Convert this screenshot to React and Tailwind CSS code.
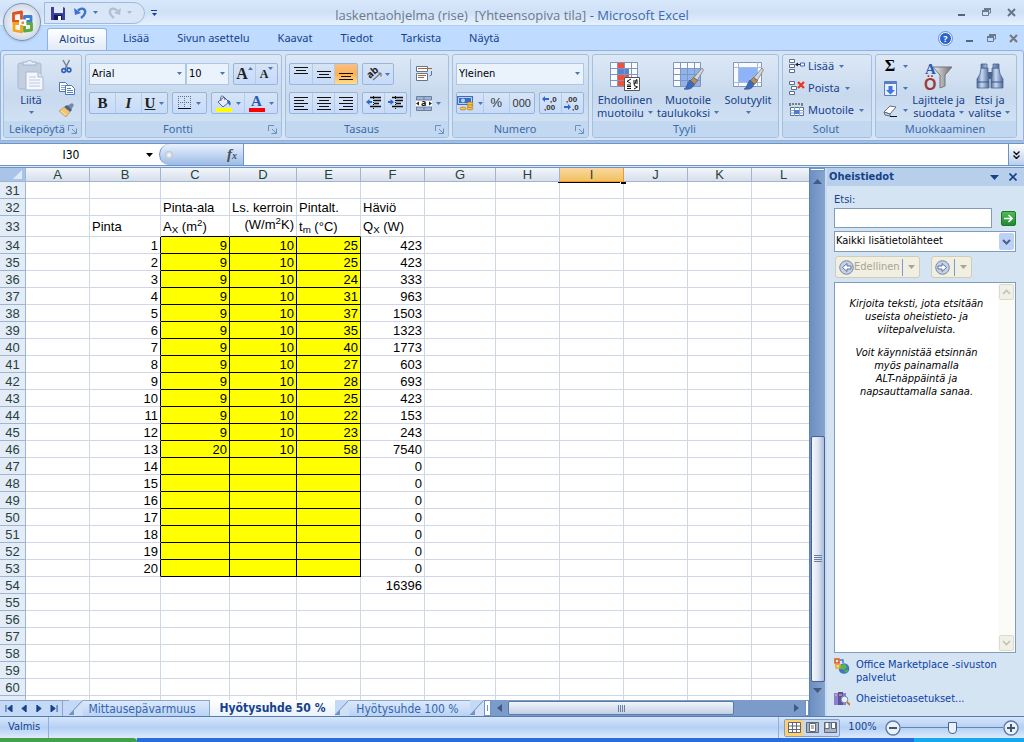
import clsx from 'clsx';

const UI = "font-['Noto_Sans',sans-serif]";
const PANE = "font-['DejaVu_Sans_Condensed','DejaVu_Sans',sans-serif]";

const columns = ['A', 'B', 'C', 'D', 'E', 'F', 'G', 'H', 'I', 'J', 'K', 'L'];

const surfaces = [
  [9, 10, 25, 423],
  [9, 10, 25, 423],
  [9, 10, 24, 333],
  [9, 10, 31, 963],
  [9, 10, 37, 1503],
  [9, 10, 35, 1323],
  [9, 10, 40, 1773],
  [9, 10, 27, 603],
  [9, 10, 28, 693],
  [9, 10, 25, 423],
  [9, 10, 22, 153],
  [9, 10, 23, 243],
  [20, 10, 58, 7540],
  ['', '', '', 0],
  ['', '', '', 0],
  ['', '', '', 0],
  ['', '', '', 0],
  ['', '', '', 0],
  ['', '', '', 0],
  ['', '', '', 0],
];

const cells = {
  32: { C: 'Pinta-ala', D: 'Ls. kerroin', E: 'Pintalt.', F: 'Häviö' },
  33: {
    B: 'Pinta',
    C: <>A<sub>X</sub> (m<sup>2</sup>)</>,
    D: <>(W/m<sup>2</sup>K)</>,
    E: <>t<sub>m</sub> (°C)</>,
    F: <>Q<sub>X</sub> (W)</>,
  },
  54: { F: 16396 },
};
surfaces.forEach(([c, d, e, f], i) => {
  cells[34 + i] = { B: i + 1, C: c, D: d, E: e, F: f };
});

const rows = Array.from({ length: 30 }, (_, i) => 31 + i);

/* ---------- small drawings ---------- */

function Arrow({ className = 'text-[#4b76b0]' }) {
  return (
    <svg viewBox="0 0 5 3" className={clsx('inline-block h-[3px] w-[5px] shrink-0', className)} fill="currentColor">
      <path d="M0 0h5L2.5 3z" />
    </svg>
  );
}

function OfficeLogo({ className }) {
  return (
    <svg viewBox="0 0 24 24" className={className} fill="none" strokeWidth="2.8" strokeLinejoin="round">
      <path d="M9 11.500H3.500V3.500L11.500 2v7.500" stroke="#e2531c" />
      <path d="M14.500 9.500V6.500H21V11.500H16.500" stroke="#3d7ed0" />
      <path d="M9 13.500H4V20.500L11.500 22v-7" stroke="#f2a71b" />
      <path d="M16.500 13.500H21.500V20L14.500 21v-5" stroke="#5fa83a" />
      <path d="M11.500 11.500h2.500v2.500h-2.500z" fill="#e98a3c" />
    </svg>
  );
}

function SaveIcon() {
  return (
    <svg viewBox="0 0 14 14" className="size-[14px]">
      <path d="M0 1h12l2 1v12H0z" fill="#3b3f9b" />
      <path d="M3 1h9v6H3z" fill="#dfe8fa" />
      <path d="M3 9h8v5H3z" fill="#15195c" />
      <path d="M7 10h3v4H7z" fill="#fff" />
    </svg>
  );
}

function UndoIcon({ flip, color }) {
  return (
    <svg viewBox="0 0 13 13" className={clsx('size-[13px]', flip && '-scale-x-100')} fill="none">
      <path d="M4 4.500C8 1 12 3 11 7c-.5 2-2 3.500-4 5" stroke={color} strokeWidth="2.400" />
      <path d="M0 2l1 7 6-2z" fill={color} />
    </svg>
  );
}

function MinimizeIcon() {
  return (
    <svg viewBox="0 0 9 9" className="size-[9px]">
      <path d="M1 6h7v2H1z" fill="#56657c" />
    </svg>
  );
}

function RestoreIcon() {
  return (
    <svg viewBox="0 0 9 9" className="size-[9px]" fill="none" stroke="#6c7a90">
      <path d="M2.500 3V.500H8.500V5H7" />
      <path d="M.500 3.500h6v4h-6z" />
      <path d="M0 3h7M2 1h7" strokeWidth="2" />
    </svg>
  );
}

function CloseIcon({ color = '#66758c' }) {
  return (
    <svg viewBox="0 0 9 9" className="size-[9px]" fill="none" stroke={color} strokeWidth="2">
      <path d="M1 1l7 7M8 1L1 8" />
    </svg>
  );
}

function PasteIcon() {
  return (
    <svg viewBox="0 0 28 32" className="h-8 w-7">
      <rect x="1" y="3" width="23" height="26" rx="2" fill="#c3cfe0" stroke="#a9b9d0" />
      <path d="M6 5V2h4c0-2 5-2 5 0h4v3z" fill="#e7edf6" stroke="#a4b3c9" />
      <path d="M9 12h12l5 5v13H9z" fill="#f3f7fd" stroke="#aab9ce" />
      <path d="M21 12v5h5" fill="#dbe5f3" stroke="#aab9ce" />
      <path d="M12 17h7M12 20h11M12 23h11M12 26h11" stroke="#bccbe0" />
    </svg>
  );
}

function CutIcon() {
  return (
    <svg viewBox="0 0 11 15" className="h-[15px] w-[11px]" fill="none">
      <path d="M2 1l5 9M8.500 1L4 10" stroke="#74839b" strokeWidth="1.500" />
      <circle cx="2.800" cy="11.500" r="1.900" stroke="#2f62b4" strokeWidth="1.600" />
      <circle cx="8" cy="11" r="1.900" stroke="#2f62b4" strokeWidth="1.600" />
    </svg>
  );
}

function CopyIcon() {
  return (
    <svg viewBox="0 0 16 14" className="h-[14px] w-4" stroke="#4d74b4">
      <path d="M.500 1.500h6l2 2v7h-8z" fill="#fff" />
      <path d="M2 4.500h4M2 6.500h4M2 8.500h4" stroke="#7ea0d6" />
      <path d="M6.500 4.500h6l3 3v6h-9z" fill="#fff" />
      <path d="M8 7.500h4M8 9.500h6M8 11.500h6" stroke="#5580c8" />
    </svg>
  );
}

function BrushIcon() {
  return (
    <svg viewBox="0 0 15 14" className="h-[14px] w-[15px]">
      <path d="M13 0l2 2-3 5-4-4z" fill="#7789ad" />
      <path d="M8 2l5 5-2 2-6-5z" fill="#4a5f8a" />
      <path d="M5 4l6 5-4 5-7-6z" fill="#f0c57a" stroke="#b98535" strokeWidth=".6" />
      <path d="M2 8l5 4" stroke="#fbe6b6" />
    </svg>
  );
}

function BordersIcon() {
  return (
    <svg viewBox="0 0 14 14" className="size-[14px]" fill="none" shapeRendering="crispEdges">
      <path d="M0 .500h13M0 6.500h13M.500 0v12M6.500 0v12M12.500 0v12" stroke="#5c6f8e" strokeDasharray="1 1" />
      <path d="M0 12.500h13" stroke="#111" />
    </svg>
  );
}

function FillIcon() {
  return (
    <svg viewBox="0 0 16 17" className="h-[17px] w-4">
      <path d="M2 7l6-5 5 5-6 5z" fill="#e6edf8" stroke="#56688a" />
      <path d="M5 6C3 0 8-1 9 5" fill="none" stroke="#56688a" />
      <path d="M12 5c3 1 3 4 2 6-1-2-2-3-3-4z" fill="#2d62b5" />
      <path d="M0 13h16v4H0z" fill="#ff0" />
    </svg>
  );
}

function AlignIcon({ lines, y = 3 }) {
  return (
    <svg viewBox="0 0 16 16" className="size-4" stroke="#111" shapeRendering="crispEdges">
      {lines.map(([x, w], i) => (
        <path key={i} d={`M${x} ${y + i * 3 + 0.5}h${w}`} />
      ))}
    </svg>
  );
}

function OrientationIcon() {
  return (
    <svg viewBox="0 0 17 16" className="h-4 w-[17px]">
      <text x="1" y="10" fontSize="10" fontWeight="bold" fill="#222" transform="rotate(-42 6 9)">ab</text>
      <path d="M6 14L14 7M14 7v3.500M14 7h-3.500" stroke="#7d726c" fill="none" strokeWidth="1.200" />
    </svg>
  );
}

function IndentIcon({ out }) {
  return (
    <svg viewBox="0 0 16 14" className="h-[14px] w-4">
      <path d="M4 1.500h11M8 4.500h7M8 7.500h5M4 10.500h11" stroke="#111" strokeWidth="1.600" />
      <path d="M7.500 0v14" stroke="#111" strokeDasharray="1 1" />
      <path d={out ? 'M0 6l3.500-3v2H6v2H3.500v2z' : 'M6 6L2.500 3v2H0v2h2.500v2z'} fill="#2f66cb" />
    </svg>
  );
}

function WrapIcon() {
  return (
    <svg viewBox="0 0 17 16" className="h-4 w-[17px]" fill="none">
      <path d="M.500 .500h11v5H.500z" fill="#fff" stroke="#66748a" />
      <path d="M2 2.500h14" stroke="#a2683c" />
      <path d="M15.500 5v4l-2 1" stroke="#4b76b0" />
      <path d="M.500 7.500h11v7H.500z" fill="#fff" stroke="#66748a" />
      <path d="M2 9.500h8M2 11.500h6" stroke="#a2683c" />
    </svg>
  );
}

function MergeIcon() {
  return (
    <svg viewBox="0 0 16 15" className="h-[15px] w-4">
      <path d="M.500 .500h15v14H.500z" fill="#9db4d8" stroke="#6d7f9d" />
      <path d="M0 4h16v7H0z" fill="#fff" />
      <path d="M8 0v4M8 11v4M0 4h16M0 11h16" stroke="#6d7f9d" />
      <path d="M0 7.500l3-2v4zM16 7.500l-3-2v4z" fill="#222" />
      <text x="5" y="10" fontSize="9" fontWeight="bold" fill="#111">a</text>
    </svg>
  );
}

function MoneyIcon() {
  return (
    <svg viewBox="0 0 17 16" className="h-4 w-[17px]">
      <path d="M0 1h16v9H0z" fill="#3d6cc0" />
      <path d="M1.500 2.500h13v6h-13z" fill="none" stroke="#b8d0f5" />
      <circle cx="6" cy="5.500" r="2" fill="#b8d0f5" />
      <g fill="#f6c343" stroke="#a8741a" strokeWidth=".6">
        <ellipse cx="13" cy="13.500" rx="3" ry="1.500" />
        <ellipse cx="13" cy="11" rx="3" ry="1.500" />
        <ellipse cx="13" cy="8.500" rx="3" ry="1.500" />
        <ellipse cx="6" cy="13.500" rx="3" ry="1.500" />
      </g>
    </svg>
  );
}

function DecimalIcon({ less }) {
  return (
    <svg viewBox="0 0 17 16" className="h-4 w-[17px]" fontSize="8" fontWeight="bold" fill="#333">
      <text x={less ? 2 : 8} y="7">{less ? ',00' : ',0'}</text>
      <text x={less ? 8 : 2} y="15">{less ? ',0' : ',00'}</text>
      <path d={less ? 'M7 12L4 9v2H0v2h4v2z' : 'M0 4l3-3v2h4v2H3v2z'} fill="#2f66cb" />
    </svg>
  );
}

function GridArt({ fill, children }) {
  return (
    <svg viewBox="0 0 32 32" className="size-8">
      <path d="M1.500 2.500h27v24h-27z" fill="#f7faff" />
      {fill}
      <path d="M1.500 2.500h27v24h-27zM1.500 8.500h27M1.500 14.500h27M1.500 20.500h27M8.500 2.500v24M15.500 2.500v24M22.500 2.500v24" fill="none" stroke="#8496b8" />
      {children}
    </svg>
  );
}

function PaintBrush() {
  return (
    <g>
      <path d="M30 8l1.500 2-6 10-4-2z" fill="#d4d6da" stroke="#70747b" strokeWidth=".7" />
      <path d="M21.500 17.500l4 3-3 4-4-4z" fill="#b98f56" stroke="#6f5a3c" strokeWidth=".7" />
      <path d="M18 20l4 4c-1 5-6 6-10 5 3-1 3-6 6-9z" fill="#3f6cb8" stroke="#2b4d8d" strokeWidth=".6" />
    </g>
  );
}

function ConditionalIcon() {
  return (
    <GridArt
      fill={
        <>
          <path d="M8 3h7v6H8zM8 15h12v6H8z" fill="#f2503c" />
          <path d="M8 9h12v6H8z" fill="#5583d6" />
          <path d="M8 21h7v5H8z" fill="#f2503c" />
        </>
      }
    >
      <path d="M15.500 17.500h15v13h-15z" fill="#fff" stroke="#555" />
      <path d="M22 19l-4 2.300 4 2.200M18 25h4M24 21h5M24 23h5M28 19l-3 6M18 26.500h4M18 28.500h4M25 25.500l3.500 1.500-3.500 2" fill="none" stroke="#111" />
    </GridArt>
  );
}

function TableStyleIcon() {
  return (
    <GridArt fill={<path d="M9 9h19v17H9z" fill="#8db4f0" />}>
      <PaintBrush />
    </GridArt>
  );
}

function CellStyleIcon() {
  return (
    <svg viewBox="0 0 32 32" className="size-8">
      <path d="M1.500 2.500h28v24h-28z" fill="#f7faff" stroke="#8496b8" />
      <path d="M1.500 7.500h28M1.500 22.500h28M6.500 2.500v24M25.500 2.500v24" stroke="#a9bcdb" />
      <path d="M7 8h18v14H7z" fill="#8db4f8" />
      <PaintBrush />
    </svg>
  );
}

function RowsIcon({ kind }) {
  return (
    <svg viewBox="0 0 16 15" className="h-[15px] w-4">
      {kind === 'format' ? (
        <>
          <path d="M1 3V0M4 2V0M7 2V0M10 2V0M13 3V0" stroke="#222" />
          <path d="M1.500 4.500h13v8h-13z" fill="#fff" stroke="#5c6f8e" />
          <path d="M1 7.500h14M1 10h14M5.500 4v9M10.500 4v9" stroke="#8aa2c8" />
          <path d="M5 7h5v4H5z" fill="#4a7dd8" />
        </>
      ) : (
        <>
          <g fill="#fff" stroke="#5c6f8e">
            <path d="M.500 .500h5v3h-5zM.500 10.500h5v3h-5z" />
            <path d={kind === 'delete' ? 'M2.500 5.500h5v3h-5z' : 'M.500 5.500h5v3h-5z'} />
          </g>
          {kind === 'insert' ? (
            <>
              <path d="M6 5.500l3-2v1.500h2v1H9v1.500z" fill="#222" />
              <path d="M11.500 4h4v3h-4z" fill="#fff" stroke="#3a66b5" />
            </>
          ) : (
            <path d="M9 1l6 6M15 1L9 7" stroke="#e8371f" strokeWidth="2.200" />
          )}
        </>
      )}
    </svg>
  );
}

function FillDownIcon() {
  return (
    <svg viewBox="0 0 13 15" className="h-[15px] w-[13px]">
      <path d="M.500 .500h12v14H.500z" fill="#e8f0fb" stroke="#5a7fc0" />
      <path d="M1 1h11v2H1z" fill="#5a7fc0" />
      <path d="M4.500 5h4v4H11l-4.500 4.500L2 9h2.500z" fill="#3d76dd" />
    </svg>
  );
}

function EraserIcon() {
  return (
    <svg viewBox="0 0 15 13" className="h-[13px] w-[15px]">
      <path d="M1 8l6-6 6 1-6 7z" fill="#fff" stroke="#626d80" />
      <path d="M1 8l6 2v2L2 11z" fill="#c7d3e6" stroke="#626d80" />
      <path d="M7 12.500h7" stroke="#111" />
    </svg>
  );
}

function SortFilterIcon() {
  return (
    <svg viewBox="0 0 30 30" className="size-[30px]">
      <defs>
        <linearGradient id="funnel">
          <stop offset="0" stopColor="#f2f2f2" />
          <stop offset="1" stopColor="#6b6b6b" />
        </linearGradient>
      </defs>
      <path d="M9 6h19l-7 8v11l-5 2V14z" fill="url(#funnel)" stroke="#777" />
      <text x="1" y="13" fontSize="15" fontWeight="bold" fill="#2a5bb0" className="font-['Liberation_Serif',serif]">A</text>
      <text x="0" y="29" fontSize="16" fontWeight="bold" fill="#9c3a37" className="font-['Liberation_Sans',sans-serif]">Ö</text>
    </svg>
  );
}

function BinocularsIcon() {
  return (
    <svg viewBox="0 0 30 28" className="h-7 w-[30px]">
      <defs>
        <linearGradient id="tube">
          <stop offset="0" stopColor="#4f6b9c" />
          <stop offset=".4" stopColor="#c9d8f0" />
          <stop offset="1" stopColor="#4f6b9c" />
        </linearGradient>
      </defs>
      <path d="M12 10h6v7h-6z" fill="#4a6594" />
      <g fill="url(#tube)" stroke="#4d658f" strokeWidth=".8">
        <path d="M6 6h7v7l1 4v9H2v-9l3-5z" />
        <path d="M17 6h7l1 6 3 5v9H16v-9l1-4z" />
        <path d="M6 2h6v4H6zM18 2h6v4h-6z" />
      </g>
      <path d="M2 20h12M16 20h12" stroke="#3d5580" />
    </svg>
  );
}

/* ---------- ribbon ---------- */

function Group({ title, launcher, className, children }) {
  return (
    <section className={clsx('flex h-[84px] shrink-0 flex-col overflow-hidden rounded-[3px] border border-[#a3c0e2] bg-linear-to-b from-[#dde8f5] via-[#c8d9ee] to-[#d6e6f8]', className)}>
      <div className="flex flex-1 px-[3px]">{children}</div>
      <h2 className="flex h-4 items-center bg-[#c1d8f0] px-[2px] pr-1 text-[#3e6aaa]">
        <span className="flex-1 text-center">{title}</span>
        {launcher && (
          <button aria-label={`${title}: lisää`} className="grid size-[9px] place-items-center">
            <svg viewBox="0 0 9 9" className="size-[9px]" fill="none" stroke="#6a8fc0">
              <path d="M.500 6V.500H6M3.500 8.500h5v-5M4 4l4 4" />
            </svg>
          </button>
        )}
      </h2>
    </section>
  );
}

function Box({ className, children }) {
  return (
    <div className={clsx('flex h-[22px] items-stretch divide-x divide-[#b4cbe8] rounded-[2px] border border-[#96b6dd] bg-linear-to-b from-[#d7e4f5] to-[#c6dafa]', className)}>
      {children}
    </div>
  );
}

function Tool({ label, active, className, children }) {
  return (
    <button
      aria-label={label}
      className={clsx('flex flex-1 items-center justify-center gap-1', active && 'bg-linear-to-b from-[#f5c08a] via-[#ffb04c] to-[#ffe08a]', className)}
    >
      {children}
    </button>
  );
}

function Combo({ label, options, className }) {
  return (
    <div className={clsx('relative h-[22px]', className)}>
      <select aria-label={label} className={clsx('h-full w-full appearance-none border border-[#abc7ec] bg-[#eaf2fb] pl-[2px] text-[11px] text-black', PANE)}>
        {options.map((o) => (
          <option key={o}>{o}</option>
        ))}
      </select>
      <Arrow className="pointer-events-none absolute top-[9px] right-1 text-[#4b76b0]" />
    </div>
  );
}

function BigButton({ icon, lines, arrowBelow, className }) {
  return (
    <button className={clsx('flex flex-col items-center pt-[3px] leading-[13px] whitespace-nowrap', className)}>
      <span className="grid h-[35px] place-items-center">{icon}</span>
      <span>{lines[0]}</span>
      {lines[1] && (
        <span className="flex items-center gap-1">
          {lines[1]} <Arrow />
        </span>
      )}
      {arrowBelow && <span className="flex h-[13px] items-center"><Arrow /></span>}
    </button>
  );
}

function SmallButton({ icon, text, label }) {
  return (
    <button aria-label={label} className="flex h-[22px] items-center gap-[3px]">
      <span className="grid w-4 place-items-center">{icon}</span>
      {text}
      <Arrow className="ml-[2px] text-[#4b76b0]" />
    </button>
  );
}

function Ribbon() {
  return (
    <div className="flex h-[91px] gap-[3px] overflow-hidden rounded-t-[3px] border border-[#8db2e3] bg-[#d6e4f4] px-[2px] pt-[3px] text-[11px] text-[#15428b]">
      <Group title="Leikepöytä" launcher className="w-[79px]">
        <BigButton icon={<PasteIcon />} lines={['Liitä']} arrowBelow className="w-12" />
        <div className="flex flex-1 flex-col items-center">
          <button aria-label="Leikkaa" className="grid h-[22px] place-items-center"><CutIcon /></button>
          <button aria-label="Kopioi" className="grid h-[22px] place-items-center"><CopyIcon /></button>
          <button aria-label="Muotoilusivellin" className="grid h-[22px] place-items-center"><BrushIcon /></button>
        </div>
      </Group>

      <Group title="Fontti" launcher className="w-[197px]">
        <div className="flex flex-1 flex-col gap-[7px] pt-2">
          <div className="flex">
            <Combo label="Fontti" options={['Arial']} className="w-[97px]" />
            <Combo label="Fonttikoko" options={['10']} className="w-[43px]" />
            <Box className="ml-1 w-[45px] font-['Liberation_Serif',serif] font-bold text-[#222]">
              <Tool label="Suurenna fonttia">
                <span className="text-[16px] leading-none">A</span>
                <Arrow className="-ml-1 mb-3 rotate-180 text-[#4b76b0]" />
              </Tool>
              <Tool label="Pienennä fonttia">
                <span className="text-[12px] leading-none">A</span>
                <Arrow className="-ml-1 mb-3 text-[#4b76b0]" />
              </Tool>
            </Box>
          </div>
          <div className="flex gap-1 font-['Liberation_Serif',serif] text-[15px] text-[#222]">
            <Box className="w-[79px]">
              <Tool label="Lihavointi" className="font-bold">B</Tool>
              <Tool label="Kursivointi" className="font-bold italic">I</Tool>
              <Tool label="Alleviivaus" className="font-bold"><span className="underline">U</span><Arrow /></Tool>
            </Box>
            <Box className="w-[35px]"><Tool label="Reunat"><BordersIcon /><Arrow /></Tool></Box>
            <Box className="w-[67px]">
              <Tool label="Täyttöväri"><FillIcon /><Arrow /></Tool>
              <Tool label="Fontin väri">
                <span className="w-4 border-b-4 border-[#f00] font-bold leading-[13px] text-[#2a5bb0]">A</span>
                <Arrow />
              </Tool>
            </Box>
          </div>
        </div>
      </Group>

      <Group title="Tasaus" launcher className="w-[164px]">
        <div className="flex flex-col gap-[7px] pt-2">
          <div className="flex gap-1">
            <Box className="w-[69px]">
              <Tool label="Tasaa ylös"><AlignIcon y={1} lines={[[1, 14], [3, 10], [1, 14]]} /></Tool>
              <Tool label="Tasaa keskelle"><AlignIcon y={5} lines={[[1, 14], [3, 10], [1, 14]]} /></Tool>
              <Tool label="Tasaa alas" active><AlignIcon y={7} lines={[[1, 14], [3, 10], [1, 14]]} /></Tool>
            </Box>
            <Box className="w-8"><Tool label="Suunta" className="gap-px"><OrientationIcon /><Arrow /></Tool></Box>
          </div>
          <div className="flex gap-1">
            <Box className="w-[69px]">
              <Tool label="Tasaa vasemmalle"><AlignIcon y={2} lines={[[1, 14], [1, 10], [1, 14], [1, 10], [1, 14]]} /></Tool>
              <Tool label="Keskitä"><AlignIcon y={2} lines={[[1, 14], [3, 10], [1, 14], [3, 10], [1, 14]]} /></Tool>
              <Tool label="Tasaa oikealle"><AlignIcon y={2} lines={[[1, 14], [5, 10], [1, 14], [5, 10], [1, 14]]} /></Tool>
            </Box>
            <Box className="w-[45px]">
              <Tool label="Pienennä sisennystä"><IndentIcon out /></Tool>
              <Tool label="Suurenna sisennystä"><IndentIcon /></Tool>
            </Box>
          </div>
        </div>
        <div className="my-1 ml-[3px] w-px bg-[#9dbbe0]" />
        <div className="flex flex-col gap-[7px] pt-2 pl-[5px]">
          <button aria-label="Rivitä teksti" className="flex h-[22px] items-center"><WrapIcon /></button>
          <button aria-label="Yhdistä ja keskitä" className="flex h-[22px] items-center gap-1"><MergeIcon /><Arrow /></button>
        </div>
      </Group>

      <Group title="Numero" launcher className="w-[137px]">
        <div className="flex flex-col gap-[7px] pt-2">
          <Combo label="Lukumuoto" options={['Yleinen']} className="w-[128px]" />
          <div className="flex gap-1 font-['Liberation_Sans',sans-serif] text-[#333]">
            <Box className="w-[79px]">
              <Tool label="Valuutta"><MoneyIcon /><Arrow /></Tool>
              <Tool label="Prosentti" className="text-[13px]">%</Tool>
              <Tool label="Tuhaterotin">000</Tool>
            </Box>
            <Box className="w-[45px]">
              <Tool label="Lisää desimaaleja"><DecimalIcon /></Tool>
              <Tool label="Vähennä desimaaleja"><DecimalIcon less /></Tool>
            </Box>
          </div>
        </div>
      </Group>

      <Group title="Tyyli" className="w-[187px]">
        <BigButton icon={<ConditionalIcon />} lines={['Ehdollinen', 'muotoilu']} className="w-[58px]" />
        <BigButton icon={<TableStyleIcon />} lines={['Muotoile', 'taulukoksi']} className="w-[68px]" />
        <BigButton icon={<CellStyleIcon />} lines={['Solutyylit']} arrowBelow className="w-[52px]" />
      </Group>

      <Group title="Solut" className="w-[90px]">
        <div className="flex flex-col pl-[3px]">
          <SmallButton icon={<RowsIcon kind="insert" />} text="Lisää" />
          <SmallButton icon={<RowsIcon kind="delete" />} text="Poista" />
          <SmallButton icon={<RowsIcon kind="format" />} text="Muotoile" />
        </div>
      </Group>

      <Group title="Muokkaaminen" className="w-[142px]">
        <div className="flex w-[33px] flex-col pl-[3px]">
          <SmallButton label="Summa" icon={<span className="font-['Liberation_Serif',serif] text-[16px] font-bold text-black">Σ</span>} />
          <SmallButton label="Täyttö" icon={<FillDownIcon />} />
          <SmallButton label="Tyhjennä" icon={<EraserIcon />} />
        </div>
        <BigButton icon={<SortFilterIcon />} lines={['Lajittele ja', 'suodata']} className="w-[56px]" />
        <BigButton icon={<BinocularsIcon />} lines={['Etsi ja', 'valitse']} className="w-[48px]" />
      </Group>
    </div>
  );
}

function TitleBar() {
  return (
    <header className="relative grid h-[26px] grid-cols-[1fr_auto_1fr] items-center border-b border-[#b0cfea] bg-linear-to-b from-[#d9e8fb] via-[#cfe0f7] to-[#e6f1fd]">
      <div className="ml-11 flex items-center">
        <div className="flex h-[22px] items-center gap-[6px] rounded-r-full border border-[#9dbbe0] bg-[#d8e6f7] pr-3 pl-[6px]">
          <button aria-label="Tallenna"><SaveIcon /></button>
          <button aria-label="Kumoa" className="ml-[3px] flex items-center gap-[6px]">
            <UndoIcon color="#3e72cf" />
            <Arrow />
          </button>
          <button aria-label="Tee uudelleen" className="ml-1 flex items-center gap-[6px]">
            <UndoIcon flip color="#b1bfd3" />
            <Arrow className="text-[#a9b9cf]" />
          </button>
        </div>
        <button aria-label="Mukauta" className="ml-[6px] flex flex-col items-center gap-[2px]">
          <span className="h-px w-[6px] bg-[#15428b]" />
          <Arrow className="text-[#15428b]" />
        </button>
      </div>
      <h1 className="pt-1 font-['Open_Sans','Noto_Sans',sans-serif] text-[13px] leading-[18px] whitespace-pre text-[#6b7889]">
        {'laskentaohjelma (rise)  [Yhteensopiva tila] '}
        <span className="text-[#3e6aaa]">- Microsoft Excel</span>
      </h1>
      <div className="flex justify-end gap-4 pr-2">
        <button aria-label="Pienennä"><MinimizeIcon /></button>
        <button aria-label="Palauta"><RestoreIcon /></button>
        <button aria-label="Sulje"><CloseIcon /></button>
      </div>
      <button
        aria-label="Office-painike"
        className="absolute top-[3px] left-[3px] z-10 grid size-[38px] place-items-center rounded-full border border-[#7d93b4] bg-radial from-white via-[#e3e9f2] to-[#b4c3d8] shadow"
      >
        <OfficeLogo className="size-6" />
      </button>
    </header>
  );
}

function TabRow() {
  const tab = 'flex h-full items-center';
  return (
    <nav className="flex h-6 items-center bg-[#bfdbff] pl-[47px] text-[11px] text-[#15428b]">
      <button className="mt-[2px] h-[23px] w-[60px] rounded-t-[3px] border border-b-0 border-[#8db2e3] bg-linear-to-b from-white to-[#dfe9f6]">Aloitus</button>
      <button className={clsx(tab, 'ml-4')}>Lisää</button>
      <button className={clsx(tab, 'ml-7')}>Sivun asettelu</button>
      <button className={clsx(tab, 'ml-7')}>Kaavat</button>
      <button className={clsx(tab, 'ml-7')}>Tiedot</button>
      <button className={clsx(tab, 'ml-7')}>Tarkista</button>
      <button className={clsx(tab, 'ml-7')}>Näytä</button>
      <div className="ml-auto flex items-center gap-[13px] pr-[6px]">
        <button aria-label="Ohje" className="grid size-[13px] place-items-center rounded-full border border-white bg-[#2a62cf] text-[9px] leading-none font-bold text-white outline outline-[#6d92cd]">?</button>
        <button aria-label="Pienennä ikkuna"><MinimizeIcon /></button>
        <button aria-label="Palauta ikkuna"><RestoreIcon /></button>
        <button aria-label="Sulje ikkuna"><CloseIcon color="#77777c" /></button>
      </div>
    </nav>
  );
}

function FormulaBar() {
  return (
    <div className="flex h-[23px] border-y border-[#6f93c3] bg-white">
      <div className="flex w-[159px] items-center pr-[6px]">
        <input aria-label="Nimiruutu" defaultValue="I30" className={clsx('w-0 flex-1 pr-1 text-center text-[12px] text-black', PANE)} />
        <svg viewBox="0 0 7 4" className="h-1 w-[7px]"><path d="M0 0h7L3.500 4z" /></svg>
      </div>
      <div className="flex w-[85px] items-center justify-between rounded-l-full border-r border-l border-[#6f93c3] bg-linear-to-b from-[#eaf2fd] to-[#9dbbe6] pr-[6px] pl-[5px]">
        <span className="size-2 rounded-full bg-radial from-white to-[#a3acba]" />
        <button aria-label="Lisää funktio" className="font-['Liberation_Serif',serif] text-[15px] leading-none font-bold text-[#4a4f58] italic">
          f<span className="text-[10px]">x</span>
        </button>
      </div>
      <input aria-label="Kaavarivi" className="min-w-0 flex-1" />
      <button aria-label="Laajenna kaavarivi" className="grid w-4 place-items-center border-l border-[#6f93c3] bg-linear-to-b from-white to-[#b9cfee]">
        <svg viewBox="0 0 7 8" className="h-2 w-[7px]" fill="none" stroke="#111" strokeWidth="1.400">
          <path d="M.500 .500l3 3 3-3M.500 4.500l3 3 3-3" />
        </svg>
      </button>
    </div>
  );
}

/* ---------- sheet ---------- */

function borderColor(row, col) {
  const yellowRow = row >= 34 && row <= 53;
  const yellowCol = 'CDE'.includes(col);
  if (yellowRow && yellowCol) return 'border-black bg-[#ff0]';
  return clsx(
    yellowRow && col === 'B' ? 'border-r-black' : 'border-r-[#d0d7e5]',
    row === 33 && yellowCol ? 'border-b-black' : 'border-b-[#d0d7e5]',
  );
}

function verticalAlign(row, col) {
  if (row !== 33) return 'align-bottom';
  return col === 'D' ? 'align-top' : 'align-middle';
}

function Sheet() {
  return (
    <div className="min-h-0 flex-1 overflow-hidden bg-white">
      <table className="w-full min-w-[816px] table-fixed border-separate border-spacing-0 font-['Liberation_Sans',sans-serif] text-[13px] leading-[14px] text-black">
        <colgroup>
          <col className="w-[26px]" />
          <col className="w-[64px]" />
          <col className="w-[71px]" />
          <col className="w-[69px]" />
          <col className="w-[67px]" />
          <col className="w-[64px]" />
          <col className="w-[64px]" />
          <col className="w-[71px]" />
          <col className="w-[64px]" />
          <col className="w-[64px]" />
          <col className="w-[64px]" />
          <col className="w-[64px]" />
          <col />
        </colgroup>
        <thead>
          <tr className="h-[14px] leading-[13px] text-[#27413e]">
            <th className="border-r border-b border-[#9eb6ce] bg-[#a9c4e9] p-0">
              <svg viewBox="0 0 25 13" className="h-[13px] w-[25px]"><path d="M22 2v9h-9z" fill="#dfe9f7" /></svg>
            </th>
            {columns.map((c) => (
              <th
                key={c}
                className={clsx(
                  'relative border-r border-b p-0 font-normal',
                  c === 'I' ? 'border-[#f29536] bg-linear-to-b from-[#f9d99f] to-[#f1c15f]' : 'border-[#9eb6ce] bg-linear-to-b from-[#f3f6fb] to-[#d7dfeb]',
                )}
              >
                {c}
                {c === 'I' && (
                  <>
                    <span className="absolute -bottom-[2px] -left-[2px] h-px w-[62px] bg-black" />
                    <span className="absolute -right-[3px] -bottom-[3px] h-[2px] w-[5px] bg-black" />
                  </>
                )}
              </th>
            ))}
          </tr>
        </thead>
        <tbody>
          {rows.map((r) => (
            <tr key={r} className={r === 33 ? 'h-[21px]' : 'h-[17px]'}>
              <th className="border-r border-b border-[#9eb6ce] bg-[#e4ecf7] p-0 pt-[2px] font-normal text-[#27413e]">{r}</th>
              {columns.map((c) => {
                const value = cells[r]?.[c];
                const right = typeof value === 'number' || (r === 33 && c === 'D');
                return (
                  <td
                    key={c}
                    className={clsx(
                      'border-r border-b px-[2px] pt-[2px] pb-0 whitespace-nowrap',
                      right ? 'text-right' : 'text-left',
                      verticalAlign(r, c),
                      borderColor(r, c),
                    )}
                  >
                    {value}
                  </td>
                );
              })}
            </tr>
          ))}
          <tr className="h-[17px]">
            <th className="border-r border-[#9eb6ce] bg-[#e4ecf7] p-0" />
            {columns.map((c) => (
              <td key={c} className="border-r border-[#d0d7e5]" />
            ))}
          </tr>
        </tbody>
      </table>
    </div>
  );
}

function Slant() {
  return (
    <svg viewBox="0 0 14 16" className="h-4 w-[14px] shrink-0">
      <path d="M14 0v16H0z" fill="#cfe0f7" />
      <path d="M0 15L13.500 .500" stroke="#6f93c3" fill="none" />
      <path d="M0 15l5-5v5z" fill="#6f93c3" />
    </svg>
  );
}

function SheetTabs() {
  const nav = [
    ['Ensimmäinen', 'M1 0v8M8 0L3 4l5 4z'],
    ['Edellinen', 'M7 0L2 4l5 4z'],
    ['Seuraava', 'M2 0l5 4-5 4z'],
    ['Viimeinen', 'M8 0v8M1 0l5 4-5 4z'],
  ];
  return (
    <div className="flex h-4 shrink-0 items-stretch bg-[#c3d9f6] text-[#15428b]">
      <div className="flex w-[63px] items-center gap-[7px] border-t border-r border-[#8ba6cc] pl-[5px]">
        {nav.map(([label, d]) => (
          <button key={label} aria-label={label}>
            <svg viewBox="0 0 9 8" className="h-[7px] w-2" fill="#15428b" stroke="#15428b" strokeWidth="1">
              <path d={d} />
            </svg>
          </button>
        ))}
      </div>
      <div className={clsx('flex text-[12px] leading-4', PANE)}>
        <span className="flex w-[6px] border-t border-[#8ba6cc]" />
        <Slant />
        <button className="w-[127px] border-t border-r border-[#8ba6cc] bg-linear-to-b from-[#dce9fa] to-[#b9d2f4] pr-2 text-[#3465ae]">Mittausepävarmuus</button>
        <button className="w-[125px] bg-linear-to-b from-white to-[#e9f1fb] font-bold whitespace-nowrap">Hyötysuhde 50 %</button>
        <Slant />
        <button className="w-[121px] border-t border-[#8ba6cc] bg-linear-to-b from-[#dce9fa] to-[#b9d2f4] pr-1 text-[#3465ae]">Hyötysuhde 100 %</button>
        <Slant />
      </div>
      <div className="w-[7px] border border-[#6f93c3] bg-white px-[2px] py-1"><div className="h-full w-px bg-[#6f93c3]" /></div>
      <div className="flex min-w-0 flex-1 items-center gap-[6px] bg-[#7b9ccb] px-[6px]">
        <button aria-label="Vieritä vasemmalle"><svg viewBox="0 0 5 8" className="h-2 w-[5px]"><path d="M5 0v8L0 4z" fill="#44597f" /></svg></button>
        <div className="flex h-[14px] w-[226px] items-center justify-center gap-px rounded-[2px] border border-[#5b7aa8] bg-linear-to-b from-[#f1f5fb] to-[#c3d0e4]">
          {[0, 1, 2, 3].map((i) => <span key={i} className="h-[7px] w-px bg-[#6b7f9f]" />)}
        </div>
        <button aria-label="Vieritä oikealle" className="ml-auto"><svg viewBox="0 0 5 8" className="h-2 w-[5px]"><path d="M0 0v8l5-4z" fill="#44597f" /></svg></button>
      </div>
      <div className="w-1 border border-[#6f93c3] bg-white" />
    </div>
  );
}

function VScroll() {
  return (
    <div className="flex w-4 shrink-0 flex-col items-center border-l border-[#5f82b5] bg-linear-to-r from-[#6c8fc2] to-[#86a4cf] pb-[18px]">
      <div className="h-[3px] w-full border border-[#6f93c3] bg-white" />
      <button aria-label="Vieritä ylös" className="grid h-5 place-items-center"><svg viewBox="0 0 9 5" className="h-[5px] w-[9px]"><path d="M4.500 0L9 5H0z" fill="#44597f" /></svg></button>
      <div className="flex-1" />
      <div className="flex w-[14px] flex-1 flex-col items-center justify-center gap-px rounded-[2px] border border-[#4a5f96] bg-linear-to-r from-[#f4f7fc] via-[#dde5f0] to-[#a9bdda]">
        {[0, 1, 2, 3].map((i) => <span key={i} className="h-px w-2 bg-[#6b7f9f]" />)}
      </div>
      <button aria-label="Vieritä alas" className="grid h-4 place-items-center"><svg viewBox="0 0 9 5" className="h-[5px] w-[9px]"><path d="M4.500 5L9 0H0z" fill="#44597f" /></svg></button>
    </div>
  );
}

/* ---------- research pane ---------- */

function RoundArrow({ left }) {
  return (
    <svg viewBox="0 0 15 15" className={clsx('size-[15px] shrink-0', left && '-scale-x-100')}>
      <circle cx="7.500" cy="7.500" r="6.800" fill="#c4d0e4" stroke="#7488ac" />
      <path d="M3 6h4V3.500l4.500 4L7 11.500V9H3z" fill="#fff" stroke="#5d73a0" />
    </svg>
  );
}

function PaneButton({ children, label, className }) {
  return (
    <div className={clsx('flex h-[22px] items-center rounded-[3px] border border-[#cfccb8] bg-[#f1efe2] text-[#a7a491]', className)}>
      <button aria-label={label} className="flex flex-1 items-center pl-[3px]">{children}</button>
      <button aria-label={`${label}: luettelo`} className="grid h-[17px] w-[17px] place-items-center border-l border-[#7b9ccb]">
        <svg viewBox="0 0 7 4" className="h-1 w-[7px]"><path d="M0 0h7L3.500 4z" fill="#a7a491" /></svg>
      </button>
    </div>
  );
}

function ResearchPane() {
  return (
    <aside className={clsx('flex w-[199px] shrink-0 flex-col border-l-2 border-[#c7dbf2] bg-[#d5e4f2] text-[11px]', PANE)}>
      <h2 className="flex h-[18px] items-center bg-[#b7cfea] pr-[7px] pl-[2px] font-bold text-[#15428b]">
        <span className="flex-1">Oheistiedot</span>
        <button aria-label="Ruudun valikko"><svg viewBox="0 0 9 5" className="h-[5px] w-[9px]" fill="#15428b"><path d="M0 0h9L4.500 5z" /></svg></button>
        <button aria-label="Sulje ruutu" className="ml-[10px]"><svg viewBox="0 0 8 8" className="size-2" fill="none" stroke="#15428b" strokeWidth="1.600"><path d="M.500 .500l7 7M7.500 .500l-7 7" /></svg></button>
      </h2>
      <div className="flex min-h-0 flex-1 flex-col pr-2 pb-[10px] pl-[7px]">
        <label htmlFor="search" className="pt-[6px] leading-[15px] text-[#15428b]">Etsi:</label>
        <div className="mt-px flex items-center justify-between">
          <input id="search" className="h-5 w-[158px] border border-[#7f9db9] bg-white" />
          <button aria-label="Aloita haku" className="grid size-[15px] place-items-center rounded-[2px] border border-[#1c7a2a] bg-linear-to-b from-[#4fbb57] to-[#1f8a30]">
            <svg viewBox="0 0 9 9" className="size-[9px]" fill="none" stroke="#fff" strokeWidth="1.600"><path d="M0 4.500h8M4.500 1L8 4.500 4.500 8" /></svg>
          </button>
        </div>
        <div className="relative mt-[3px] h-[21px]">
          <select aria-label="Lähteet" className="h-full w-full appearance-none border border-[#7f9db9] bg-white pl-px text-black">
            <option>Kaikki lisätietolähteet</option>
          </select>
          <span className="pointer-events-none absolute top-[2px] right-[2px] grid h-[17px] w-[15px] place-items-center rounded-[2px] bg-[#bcd0f8]">
            <svg viewBox="0 0 9 6" className="h-[6px] w-[9px]" fill="none" stroke="#4d6185" strokeWidth="2"><path d="M1 1l3.500 3.500L8 1" /></svg>
          </span>
        </div>
        <div className="mt-1 flex gap-[11px]">
          <PaneButton label="Edellinen" className="ml-px w-[85px]"><RoundArrow left />Edellinen</PaneButton>
          <PaneButton label="Seuraava" className="w-[41px]"><RoundArrow /></PaneButton>
        </div>
        <div className="mt-1 flex min-h-0 flex-1 border border-[#7f9db9] bg-white">
          <div className="flex-1 pt-[14px] text-center leading-[13px] whitespace-nowrap text-black italic">
            <p>Kirjoita teksti, jota etsitään<br />useista oheistieto- ja<br />viitepalveluista.</p>
            <p className="mt-[10px]">Voit käynnistää etsinnän<br />myös painamalla<br />ALT-näppäintä ja<br />napsauttamalla sanaa.</p>
          </div>
          <div className="flex w-[17px] flex-col justify-between bg-[#fbfbf8] p-px">
            <button aria-label="Ylös" className="grid h-4 place-items-center rounded-[2px] border border-[#dcdac8] bg-[#f1f0e8]"><svg viewBox="0 0 9 6" className="h-[6px] w-[9px]" fill="none" stroke="#c4c2b4" strokeWidth="1.600"><path d="M1 5l3.500-3.500L8 5" /></svg></button>
            <button aria-label="Alas" className="grid h-4 place-items-center rounded-[2px] border border-[#dcdac8] bg-[#f1f0e8]"><svg viewBox="0 0 9 6" className="h-[6px] w-[9px]" fill="none" stroke="#c4c2b4" strokeWidth="1.600"><path d="M1 1l3.500 3.500L8 1" /></svg></button>
          </div>
        </div>
        <a href="#" className="mt-[5px] flex gap-[6px] leading-[13px] text-[#0a3fa8]">
          <svg viewBox="0 0 16 16" className="size-4 shrink-0">
            <circle cx="10" cy="10.500" r="5.300" fill="#3b78c4" />
            <path d="M7 7l4-1 2 3-3 3-3-1zM10 13l4-2-1 4z" fill="#5cb54b" />
            <path d="M1 1h4v4H1z" fill="none" stroke="#e2531c" strokeWidth="1.500" />
            <path d="M6 2h3v3" fill="none" stroke="#3d7ed0" strokeWidth="1.500" />
            <path d="M2 6v4h4V7z" fill="none" stroke="#f2a71b" strokeWidth="1.500" />
          </svg>
          <span>Office Marketplace -sivuston palvelut</span>
        </a>
        <a href="#" className="mt-[6px] flex items-center gap-[6px] leading-[15px] text-[#0a3fa8]">
          <svg viewBox="0 0 16 16" className="size-4 shrink-0">
            <path d="M0 3h4v12H0zM9 3h3v12H9z" fill="#8d7fd0" />
            <path d="M4 2h5v13H4z" fill="#5c52a0" />
            <path d="M1 5h2M5 5h3" stroke="#e9d372" />
            <circle cx="10.500" cy="9.500" r="3.300" fill="#e3f1fd" stroke="#7d8ca5" />
            <path d="M13 12l3 3" stroke="#c47a2b" strokeWidth="2" />
          </svg>
          Oheistietoasetukset...
        </a>
      </div>
    </aside>
  );
}

function StatusBar() {
  return (
    <footer className={clsx('flex h-[22px] shrink-0 items-center border-t border-[#567db1] bg-linear-to-b from-[#d7e6f9] via-[#b5d0f4] to-[#dcebfb] text-[11px] text-[#15428b]', PANE)}>
      <span className="flex h-full w-[49px] items-center border-r border-[#8fb0dc] pl-2">Valmis</span>
      <div className="ml-auto flex h-full items-center border-l border-[#8fb0dc] pr-[5px] pl-[5px]">
        <div className="flex h-[18px] rounded-[2px] border border-[#7f9fcb] bg-[#c6d9f1]">
          <button aria-label="Normaali" className="grid w-[18px] place-items-center bg-[#ffcf70]">
            <svg viewBox="0 0 13 11" className="h-[11px] w-[13px]" fill="#fff" stroke="#5f6878"><path d="M.500 .500h12v10H.500zM4.500 0v11M8.500 0v11M0 4h13M0 7.500h13" /></svg>
          </button>
          <button aria-label="Sivun asettelu" className="grid w-[18px] place-items-center">
            <svg viewBox="0 0 13 11" className="h-[11px] w-[13px]" stroke="#5f6878"><path d="M.500 .500h12v10H.500z" fill="#a9b3c4" /><path d="M3.500 1.500h6v8h-6z" fill="#fff" /><path d="M5 4h3M5 6h3" /></svg>
          </button>
          <button aria-label="Sivunvaihdot" className="grid w-[18px] place-items-center">
            <svg viewBox="0 0 13 11" className="h-[11px] w-[13px]" stroke="#5f6878"><path d="M.500 .500h12v10H.500z" fill="#a9b3c4" /><path d="M1 .500h4v6H1zM7.500 .500h4v6h-4z" fill="#fff" /></svg>
          </button>
        </div>
        <button className="ml-2 w-[29px]">100%</button>
        <button aria-label="Loitonna" className="ml-2">
          <svg viewBox="0 0 16 16" className="size-4"><circle cx="8" cy="8" r="7" fill="#e9f1fb" stroke="#5f7ba6" strokeWidth="1.400" /><path d="M4 8h8" stroke="#44556f" strokeWidth="2" /></svg>
        </button>
        <input
          type="range"
          aria-label="Zoomaus"
          defaultValue="50"
          className="h-3 w-[102px] appearance-none bg-[linear-gradient(#6484b4,#6484b4)] bg-[length:100%_1px] bg-center bg-no-repeat [&::-webkit-slider-thumb]:h-3 [&::-webkit-slider-thumb]:w-[9px] [&::-webkit-slider-thumb]:appearance-none [&::-webkit-slider-thumb]:rounded-b-[4px] [&::-webkit-slider-thumb]:border [&::-webkit-slider-thumb]:border-[#4b658f] [&::-webkit-slider-thumb]:bg-[#e9f1fb]"
        />
        <button aria-label="Lähennä">
          <svg viewBox="0 0 16 16" className="size-4"><circle cx="8" cy="8" r="7" fill="#e9f1fb" stroke="#5f7ba6" strokeWidth="1.400" /><path d="M4 8h8M8 4v8" stroke="#44556f" strokeWidth="2" /></svg>
        </button>
      </div>
    </footer>
  );
}

export default function App() {
  return (
    <div className={clsx('flex h-screen flex-col overflow-hidden bg-[#bfdbff]', UI)}>
      <TitleBar />
      <TabRow />
      <Ribbon />
      <div className="h-[2px] shrink-0 bg-[#a3bfe4]" />
      <FormulaBar />
      <div className="h-[2px] shrink-0 border-b border-[#6f93c3] bg-[#dce9f8]" />
      <main className="flex min-h-0 flex-1">
        <div className="flex min-w-0 flex-1 flex-col">
          <Sheet />
          <SheetTabs />
        </div>
        <VScroll />
        <ResearchPane />
      </main>
      <StatusBar />
      <div className="flex h-1 shrink-0">
        <div className="w-[137px] rounded-tr bg-[#46a04a]" />
        <div className="flex-1 bg-[#2a6be0]" />
        <div className="w-[110px] bg-[#18a8ee]" />
      </div>
    </div>
  );
}
